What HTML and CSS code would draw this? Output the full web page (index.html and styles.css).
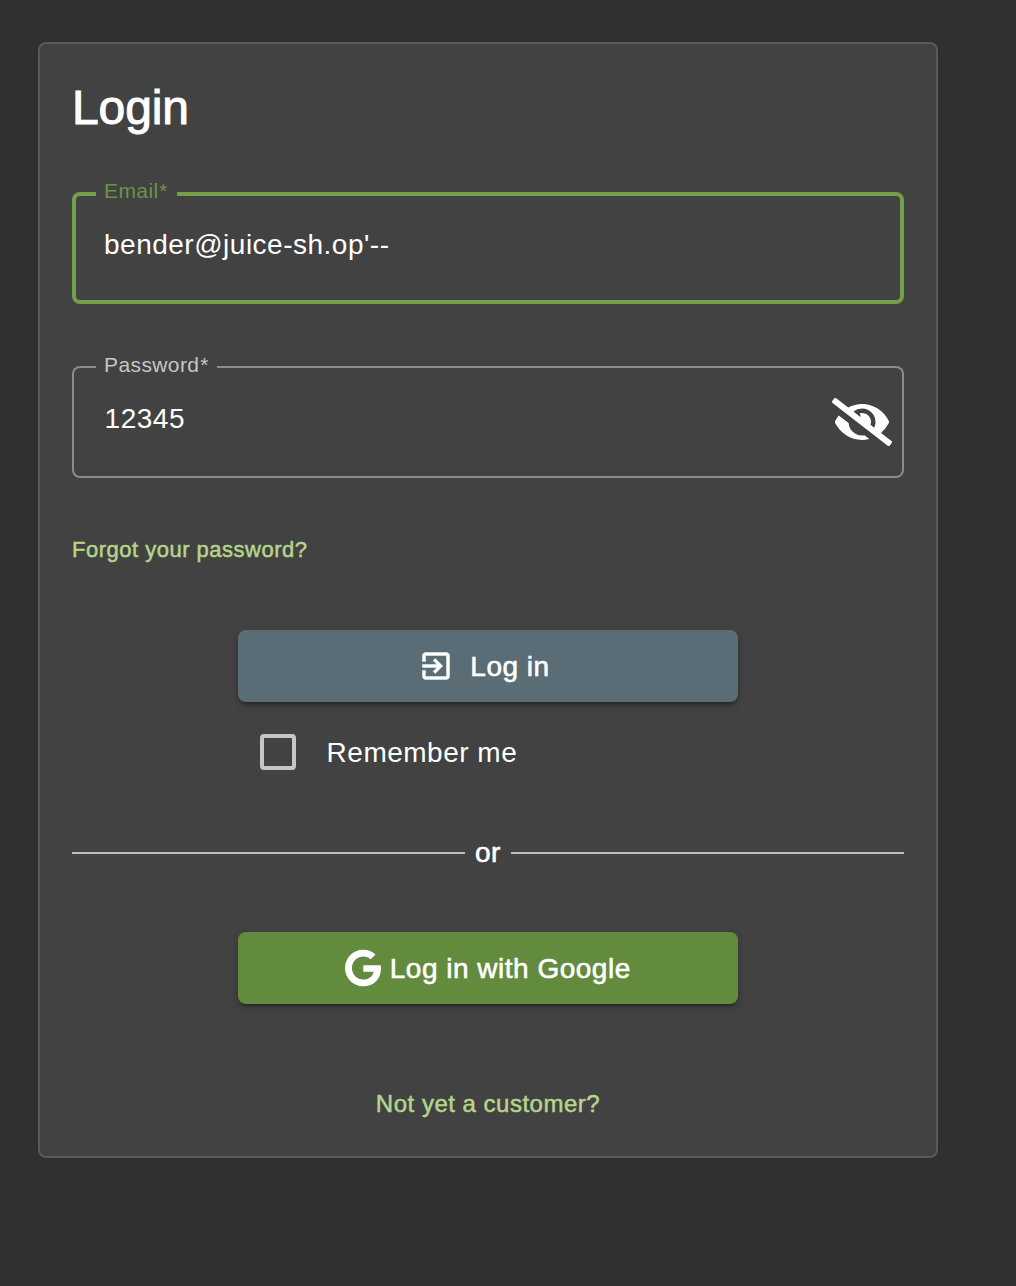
FILE: index.html
```html
<!DOCTYPE html>
<html lang="en">
<head>
<meta charset="utf-8">
<title>Login</title>
<link rel="stylesheet" href="styles.css">
</head>
<body>
<main class="card">
  <h1 class="title">Login</h1>

  <div class="field field-focused">
    <div class="outline">
      <span class="outline-start"></span>
      <span class="notch notch-email"><label class="label">Email<span class="required">*</span></label></span>
      <span class="outline-end"></span>
    </div>
    <div class="control"><span class="value">bender@juice-sh.op'--</span></div>
  </div>

  <div class="field field-password">
    <div class="outline">
      <span class="outline-start"></span>
      <span class="notch notch-password"><label class="label">Password<span class="required">*</span></label></span>
      <span class="outline-end"></span>
    </div>
    <div class="control">
      <span class="value">12345</span>
      <svg class="eye" viewBox="0 0 640 512" fill="currentColor" aria-hidden="true"><path d="M320 400c-75.85 0-137.25-58.71-142.9-133.11L72.2 185.82c-13.79 17.3-26.48 35.59-36.72 55.59a32.35 32.35 0 0 0 0 29.19C89.71 376.41 197.07 448 320 448c26.91 0 52.87-4 77.89-10.46L346 397.39a144.13 144.13 0 0 1-26 2.61zm313.82 58.1l-110.55-85.44a331.25 331.25 0 0 0 81.25-102.07 32.35 32.35 0 0 0 0-29.19C550.29 135.59 442.93 64 320 64a308.15 308.15 0 0 0-147.32 37.7L45.46 3.37A16 16 0 0 0 23 6.18L3.37 31.45A16 16 0 0 0 6.18 53.9l588.36 454.73a16 16 0 0 0 22.46-2.81l19.64-25.27a16 16 0 0 0-2.82-22.45zm-183.72-142l-39.3-30.38A94.75 94.75 0 0 0 416 256a94.76 94.76 0 0 0-121.31-92.21A47.65 47.65 0 0 1 304 192a46.64 46.64 0 0 1-1.54 10l-73.61-56.89A142.31 142.31 0 0 1 320 112a143.92 143.92 0 0 1 144 144c0 21.63-5.29 41.79-13.9 60.11z"/></svg>
    </div>
  </div>

  <a class="link forgot">Forgot your password?</a>

  <button class="button button-login" type="button">
    <svg class="icon-login" viewBox="0 0 24 24" fill="currentColor" aria-hidden="true"><path d="M10.09 15.59L11.5 17l5-5-5-5-1.41 1.41L12.67 11H3v2h9.67l-2.58 2.59zM19 3H5c-1.11 0-2 .9-2 2v4h2V5h14v14H5v-4H3v4c0 1.1.89 2 2 2h14c1.1 0 2-.9 2-2V5c0-1.1-.9-2-2-2z"/></svg>
    <span class="button-text">Log in</span>
  </button>

  <div class="remember"><span class="checkbox"></span><span class="remember-text">Remember me</span></div>

  <div class="divider"><span>or</span></div>

  <button class="button button-google" type="button">
    <svg class="icon-google" viewBox="0 0 488 512" fill="currentColor" aria-hidden="true"><path d="M488 261.8C488 403.3 391.1 504 248 504 110.8 504 0 393.2 0 256S110.8 8 248 8c66.8 0 123 24.5 166.3 64.9l-67.5 64.9C258.5 52.6 94.3 116.6 94.3 256c0 86.5 69.1 156.6 153.7 156.6 98.2 0 135-70.4 140.8-106.9H248v-85.3h236.1c2.3 12.7 3.9 24.9 3.9 41.4z"/></svg>
    <span class="button-text">Log in with Google</span>
  </button>

  <a class="link register">Not yet a customer?</a>
</main>
</body>
</html>
```

FILE: styles.css
```css
* { box-sizing: border-box; }

body {
  margin: 0;
  min-height: 1286px;
  padding: 42px 78px 0 38px;
  background: #303030;
  color: #fff;
  font: 28px/32px "Liberation Sans", Arial, sans-serif;
  letter-spacing: 0.5px;
}

.card {
  display: flex;
  flex-direction: column;
  height: 1116px;
  padding: 32px;
  background: #424242;
  border: 2px solid #595959;
  border-radius: 8px;
}

.title {
  margin: 0;
  font-size: 48px;
  font-weight: 400;
  line-height: 64px;
  letter-spacing: -0.1px;
  -webkit-text-stroke: 1px currentColor;
}

.field {
  --line: #8c8c8c;
  --stroke: 2px;
  display: grid;
  height: 112px;
  margin-top: 62px;
  color: #c6c6c6;
}
.field-focused {
  --line: #75a048;
  --stroke: 4px;
  margin-top: 52px;
  color: #6c9245;
}

.outline,
.control { grid-area: 1 / 1; }

.outline { display: flex; }
.outline-start {
  width: 24px;
  border: var(--stroke) solid var(--line);
  border-right: 0;
  border-radius: 8px 0 0 8px;
}
.outline-end {
  flex: 1;
  border: var(--stroke) solid var(--line);
  border-left: 0;
  border-radius: 0 8px 8px 0;
}
.notch {
  padding-left: 8px;
  border-bottom: var(--stroke) solid var(--line);
}
.notch-email { width: 81px; }
.notch-password { width: 121px; }

.label {
  display: block;
  margin-top: -12px;
  font-size: 21px;
  line-height: 22px;
  letter-spacing: 0.4px;
  white-space: nowrap;
}
.required { margin-left: 0.8px; }

.control {
  display: flex;
  justify-content: space-between;
  padding: 37px 12px 0 32px;
  color: #fff;
}
.field-password .control { padding-left: 32.6px; }
.eye {
  width: 60px;
  height: 48px;
  margin-top: -5px;
}

.link {
  color: #b5d58a;
  -webkit-text-stroke: 0.5px currentColor;
}
.forgot {
  margin-top: 59px;
  font-size: 22px;
  line-height: 26px;
}
.register {
  align-self: center;
  margin-top: 86px;
  font-size: 24px;
  line-height: 28px;
}

.button {
  display: flex;
  align-items: center;
  justify-content: center;
  align-self: center;
  flex: none;
  width: 500px;
  height: 72px;
  padding: 0;
  border: 0;
  border-radius: 8px;
  color: #fff;
  font: inherit;
  letter-spacing: 0.5px;
  box-shadow: 0 6px 2px -4px rgba(0, 0, 0, 0.2), 0 4px 4px rgba(0, 0, 0, 0.14), 0 2px 10px rgba(0, 0, 0, 0.12);
}
.button-text {
  padding-top: 1px;
  -webkit-text-stroke: 0.6px currentColor;
}
.button-login {
  gap: 16.5px;
  margin-top: 67px;
  padding-right: 8.5px;
  background: #5a6d77;
}
.button-google {
  gap: 8.5px;
  margin-top: 63px;
  background: #628b3d;
}
.icon-login {
  width: 36px;
  height: 36px;
  stroke: currentColor;
  stroke-width: 0.3;
}
.icon-google { width: 36px; height: 38px; }

.remember {
  display: flex;
  align-items: center;
  gap: 30.6px;
  height: 36px;
  margin: 32px 0 0 188px;
}
.remember-text { padding-top: 2px; }
.checkbox {
  width: 36px;
  height: 36px;
  border: 4px solid #c6c6c6;
  border-radius: 4px;
}

.divider {
  display: flex;
  align-items: center;
  gap: 10px;
  margin-top: 67px;
  -webkit-text-stroke: 0.6px currentColor;
}
.divider::before,
.divider::after {
  content: "";
  flex: 1;
  height: 2px;
  background: #c0c0c0;
}
```
